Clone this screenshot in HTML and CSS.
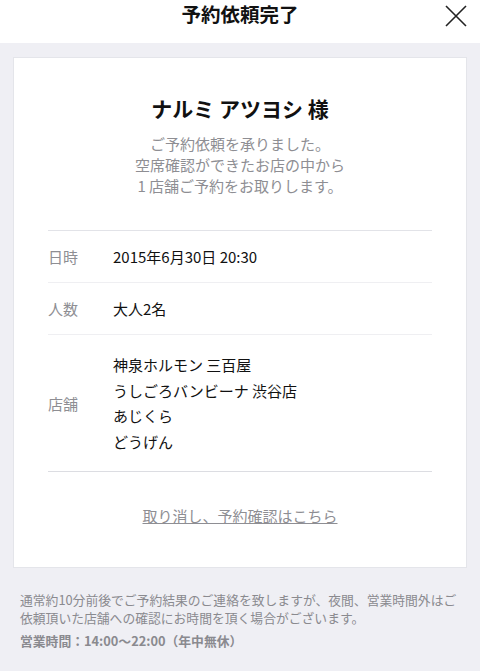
FILE: index.html
```html
<html lang="ja">

<head>
    <meta charset="UTF-8">
    <meta name="viewport" content="width=device-width, initial-scale=1.0">
    <title>予約依頼完了</title>
    <link rel="stylesheet" href="styles.css">
</head>

<body>
    <div class="header">
        <h1 class="title">予約依頼完了</h1>
        <button class="close" aria-label="閉じる">
            <svg width="22" height="22" viewBox="0 0 22 22">
                <path d="M1 1L21 21M21 1L1 21" stroke="#222" stroke-width="1.6" fill="none" />
            </svg>
        </button>
    </div>

    <div class="content">
        <div class="card">
            <h2 class="name">ナルミ アツヨシ 様</h2>
            <p class="message">
                ご予約依頼を承りました。<br>
                空席確認ができたお店の中から<br>
                1 店舗ご予約をお取りします。
            </p>

            <div class="details">
                <div class="row">
                    <div class="label">日時</div>
                    <div class="value">2015年6月30日 20:30</div>
                </div>
                <div class="row">
                    <div class="label">人数</div>
                    <div class="value">大人2名</div>
                </div>
                <div class="row shops">
                    <div class="label">店舗</div>
                    <div class="value">
                        <div>神泉ホルモン 三百屋</div>
                        <div>うしごろバンビーナ 渋谷店</div>
                        <div>あじくら</div>
                        <div>どうげん</div>
                    </div>
                </div>
            </div>

            <div class="link-wrap">
                <a class="link" href="#">取り消し、予約確認はこちら</a>
            </div>
        </div>

        <div class="notes">
            <p>通常約10分前後でご予約結果のご連絡を致しますが、夜間、営業時間外はご依頼頂いた店舗への確認にお時間を頂く場合がございます。</p>
            <p class="hours">営業時間：14:00〜22:00（年中無休）</p>
        </div>
    </div>
</body>

</html>
```

FILE: styles.css
```css
* {
    box-sizing: border-box;
}

body {
    margin: 0;
    padding: 0;
    background-color: #efeff4;
    color: #222;
    font-family: "Noto Sans CJK JP", "Noto Sans", sans-serif;
}

.header {
    position: relative;
    height: 43px;
    background-color: #fff;
    display: flex;
    justify-content: center;
    align-items: center;
}

.title {
    margin: 0 0 15px;
    font-size: 19.5px;
    font-weight: bold;
    color: #111;
    line-height: 1;
}

.close {
    position: absolute;
    right: 13px;
    top: 5px;
    padding: 0;
    border: none;
    background: none;
    cursor: pointer;
}

.content {
    padding: 14px 13px 0;
}

.card {
    background-color: #fff;
    border: 1px solid #e4e5ea;
    padding: 36px 34px 40px;
}

.name {
    margin: 0;
    text-align: center;
    font-size: 21px;
    font-weight: bold;
    line-height: 28px;
    color: #111;
}

.message {
    margin: 11px 0 0;
    text-align: center;
    font-size: 15px;
    line-height: 21px;
    color: #8e8e93;
}

.details {
    margin-top: 34px;
    border-top: 1px solid #e2e3e8;
}

.row {
    display: flex;
    align-items: center;
    border-bottom: 1px solid #efeff2;
    padding: 13px 0;
    font-size: 15px;
    line-height: 25px;
}

.row.shops {
    border-bottom: 1px solid #dcdde2;
    padding: 17px 0 16px;
    line-height: 25.7px;
}

.label {
    width: 65px;
    color: #8e8e93;
}

.value {
    color: #111;
}

.link-wrap {
    text-align: center;
    padding-top: 33px;
}

.link {
    font-size: 15px;
    line-height: 22px;
    color: #8e8e93;
    text-decoration: underline;
}

.notes {
    padding: 23px 0 0 7px;
    color: #8a8a8f;
    font-size: 12.8px;
    line-height: 18px;
}

.notes p {
    margin: 0;
}

.notes .hours {
    margin-top: 5px;
    font-weight: bold;
}
```
